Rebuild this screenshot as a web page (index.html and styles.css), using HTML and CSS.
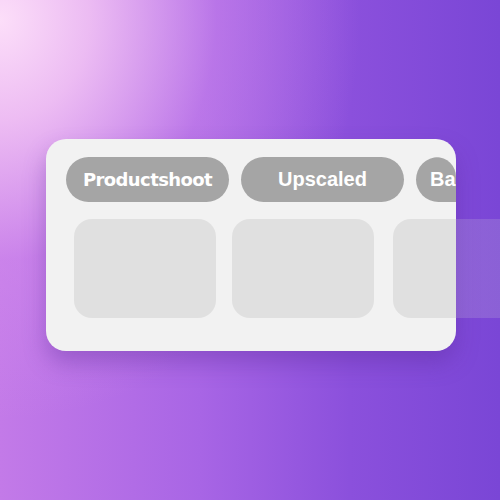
FILE: index.html
```html
<!DOCTYPE html>
<html>
<head>
<meta charset="utf-8">
<link rel="stylesheet" href="styles.css">
</head>
<body>
<div class="scene">
  <div class="card">
    <div class="pills">
      <div class="pill pill-display">Productshoot</div>
      <div class="pill">Upscaled</div>
      <div class="pill">Background</div>
    </div>
    <div class="tiles">
      <div class="tile"></div>
      <div class="tile"></div>
      <div class="tile tile-last"></div>
    </div>
  </div>
</div>
</body>
</html>
```

FILE: styles.css
```css
html, body {
  margin: 0;
  padding: 0;
  width: 500px;
  height: 500px;
  overflow: hidden;
}
.scene {
  width: 500px;
  height: 500px;
  box-sizing: border-box;
  padding: 139px 0 0 46px;
  background:
    radial-gradient(ellipse 360px 400px at 0px 20px, rgba(252,222,249,1) 0%, rgba(245,200,245,0.85) 25%, rgba(215,145,238,0.4) 60%, rgba(200,130,235,0) 100%),
    linear-gradient(to right, #c37ae8 0%, #a865e5 40%, #8b50dc 70%, #7a46d6 100%);
  font-family: "Liberation Sans", Arial, sans-serif;
}
.card {
  width: 410px;
  height: 212px;
  box-sizing: border-box;
  background: #f2f2f2;
  border-radius: 20px;
  box-shadow: 0 12px 22px rgba(90, 40, 150, 0.35);
  padding: 18px 0 0 20px;
}
.pills {
  display: flex;
  gap: 12px;
  overflow: hidden;
  width: 390px;
  border-radius: 0 20px 0 0;
}
.pill {
  flex: 0 0 auto;
  width: 163px;
  height: 45px;
  border-radius: 23px;
  background: #a5a5a5;
  color: #ffffff;
  font-weight: bold;
  font-size: 20px;
  display: flex;
  align-items: center;
  justify-content: center;
  box-sizing: border-box;
}
.pill-display {
  font-family: "DejaVu Sans", sans-serif;
  font-size: 18px;
  letter-spacing: -0.6px;
}
.pill:nth-child(3) {
  justify-content: flex-start;
  padding-left: 14px;
}
.tiles {
  display: flex;
  gap: 16px;
  margin: 17px 0 0 8px;
}
.tile {
  flex: 0 0 auto;
  width: 142px;
  height: 99px;
  border-radius: 18px;
  background: #e0e0e0;
}
.tile:nth-child(3) {
  margin-left: 3px;
}
.tile-last {
  border-radius: 18px 0 0 18px;
  background: linear-gradient(to right, #e0e0e0 0 63px, rgba(200, 190, 215, 0.22) 63px 100%);
}
```
